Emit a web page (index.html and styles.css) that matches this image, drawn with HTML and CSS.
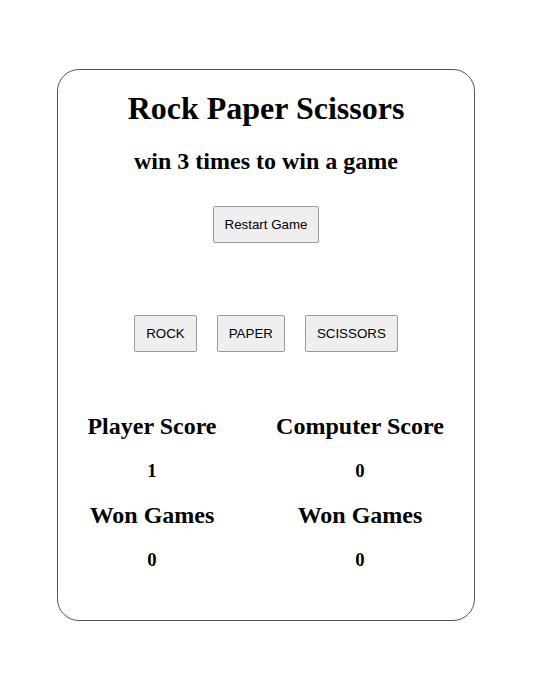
FILE: index.html
```html
<!DOCTYPE html>
<html>
<head>
<meta charset="utf-8">
<link rel="stylesheet" href="styles.css">
</head>
<body>
<div class="page">
  <div class="card">
    <h1 class="title">Rock Paper Scissors</h1>
    <h2 class="subtitle">win 3 times to win a game</h2>
    <div class="restart-row">
      <button class="btn">Restart Game</button>
    </div>
    <div class="choices">
      <button class="btn">ROCK</button>
      <button class="btn">PAPER</button>
      <button class="btn">SCISSORS</button>
    </div>
    <div class="scores">
      <h2 class="score-label">Player Score</h2>
      <h2 class="score-label">Computer Score</h2>
      <h3 class="score-value">1</h3>
      <h3 class="score-value">0</h3>
      <h2 class="score-label">Won Games</h2>
      <h2 class="score-label">Won Games</h2>
      <h3 class="score-value">0</h3>
      <h3 class="score-value">0</h3>
    </div>
  </div>
</div>
</body>
</html>
```

FILE: styles.css
```css
html, body {
  margin: 0;
  padding: 0;
  background: #ffffff;
}

.page {
  padding: 69px 0 0 57px;
}

.card {
  box-sizing: border-box;
  width: 418px;
  height: 552px;
  border: 1px solid #555555;
  border-radius: 22px;
  padding-top: 20px;
  font-family: "Liberation Serif", "Times New Roman", serif;
  color: #000000;
}

.title {
  margin: 0;
  font-size: 32px;
  line-height: 37px;
  font-weight: bold;
  text-align: center;
}

.subtitle {
  margin: 20px 0 0;
  font-size: 24px;
  line-height: 28px;
  font-weight: bold;
  text-align: center;
}

.restart-row {
  margin-top: 31px;
  display: flex;
  justify-content: center;
}

.btn {
  font-family: "Liberation Sans", Arial, sans-serif;
  font-size: 13.33px;
  line-height: 15px;
  color: #000000;
  background: #efefef;
  border: 1px solid #9a9a9a;
  border-radius: 2px;
  padding: 10px 11px;
  margin: 0;
}

.choices {
  margin-top: 72px;
  display: flex;
  justify-content: center;
  gap: 20px;
}

.scores {
  margin-top: 60px;
  display: grid;
  grid-template-columns: 188px 188px;
  column-gap: 20px;
  row-gap: 19px;
}

.score-label {
  margin: 0;
  font-size: 24px;
  line-height: 28px;
  font-weight: bold;
  text-align: center;
}

.score-value {
  margin: 1px 0 0;
  font-size: 18.72px;
  line-height: 22px;
  font-weight: bold;
  text-align: center;
}
```
